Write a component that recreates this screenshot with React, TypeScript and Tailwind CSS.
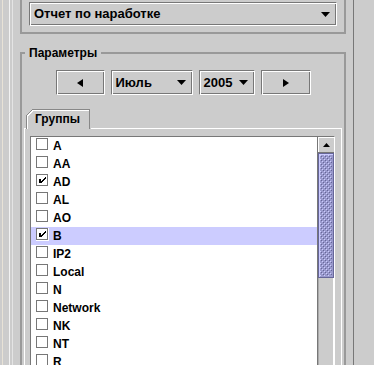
import React from "react";

const groups = [
  { label: "A", checked: false },
  { label: "AA", checked: false },
  { label: "AD", checked: true },
  { label: "AL", checked: false },
  { label: "AO", checked: false },
  { label: "B", checked: true, selected: true },
  { label: "IP2", checked: false },
  { label: "Local", checked: false },
  { label: "N", checked: false },
  { label: "Network", checked: false },
  { label: "NK", checked: false },
  { label: "NT", checked: false },
  { label: "R", checked: false },
];

// Metal "flush 3D" border: dark outer top-left, white outer bottom-right
const flush3d =
  "border border-t-[#777] border-l-[#777] border-r-white border-b-white shadow-[inset_1px_1px_0_#fff,inset_-1px_-1px_0_#777]";

function DownArrow() {
  return (
    <svg width="9" height="5" viewBox="0 0 9 5" className="shrink-0">
      <polygon points="0,0 9,0 4.5,5" fill="#000" />
    </svg>
  );
}

function SideArrow({ dir }: { dir: "left" | "right" }) {
  return (
    <svg width="6" height="8" viewBox="0 0 6 8">
      {dir === "left" ? (
        <polygon points="0,4 6,0 6,8" fill="#000" />
      ) : (
        <polygon points="6,4 0,0 0,8" fill="#000" />
      )}
    </svg>
  );
}

function Combo({ label, className }: { label: string; className: string }) {
  return (
    <div className={`${flush3d} ${className} flex items-center justify-between bg-[#ccc] pl-[4px] pr-[6px] text-[13px]`}>
      <span>{label}</span>
      <DownArrow />
    </div>
  );
}

function CheckBox({ checked }: { checked: boolean }) {
  return (
    <svg width="13" height="13" viewBox="0 0 13 13" shapeRendering="crispEdges" className="shrink-0 mt-[1px]">
      <rect x="0" y="0" width="13" height="13" fill="#fff" />
      <rect x="0" y="0" width="12" height="1" fill="#777" />
      <rect x="0" y="0" width="1" height="12" fill="#777" />
      <rect x="11" y="1" width="1" height="11" fill="#777" />
      <rect x="1" y="11" width="11" height="1" fill="#777" />
      {checked && (
        <g fill="#000">
          <rect x="3" y="5" width="2" height="4" />
          <rect x="9" y="3" width="1" height="2" />
          <rect x="8" y="4" width="1" height="2" />
          <rect x="7" y="5" width="1" height="2" />
          <rect x="6" y="6" width="1" height="2" />
          <rect x="5" y="7" width="1" height="2" />
        </g>
      )}
    </svg>
  );
}

function Bumps() {
  return (
    <svg width="100%" height="100%" className="block">
      <defs>
        <pattern id="bumps" width="4" height="4" patternUnits="userSpaceOnUse">
          <rect width="4" height="4" fill="#9999cc" />
          <rect x="0" y="0" width="1" height="1" fill="#ccccff" />
          <rect x="2" y="2" width="1" height="1" fill="#ccccff" />
          <rect x="1" y="1" width="1" height="1" fill="#666699" />
          <rect x="3" y="3" width="1" height="1" fill="#666699" />
        </pattern>
      </defs>
      <rect width="100%" height="100%" fill="url(#bumps)" />
    </svg>
  );
}

function ScrollBar() {
  return (
    <div className="w-[17px] shrink-0 flex flex-col border-l border-[#777] bg-[#ccc]">
      <div className="h-[16px] flex items-center justify-center shadow-[inset_1px_1px_0_#fff] border-b border-[#777]">
        <svg width="7" height="4" viewBox="0 0 7 4">
          <polygon points="3.5,0 7,4 0,4" fill="#000" />
        </svg>
      </div>
      <div className="h-[125px] border border-[#666699] p-[1px] bg-[#9999cc] shadow-[inset_1px_1px_0_#ccccff]">
        <Bumps />
      </div>
      <div className="flex-1 border-r border-white shadow-[inset_1px_0_0_#aaa]" />
    </div>
  );
}

export default function App() {
  return (
    <div className="w-[374px] h-[365px] overflow-hidden bg-[#ccc] flex font-['Liberation_Sans',Arial,sans-serif] font-bold text-[12px] text-black">
      {/* left edge stripes */}
      <div className="w-[20px] shrink-0 flex">
        <div className="w-[2px]" />
        <div className="w-[1px] bg-[#e8e2d6]" />
        <div className="w-[6px]" />
        <div className="w-[1px] bg-[#f2f2f2]" />
        <div className="w-[2px]" />
        <div className="w-[1px] bg-[#e4e4e4]" />
      </div>

      <div className="w-[326px] shrink-0 flex flex-col">
        {/* report type */}
        <div className="border-x-2 border-b-2 border-[#999] pt-[2px] pb-[6px] px-[7px]">
          <Combo label="Отчет по наработке" className="h-[24px]" />
        </div>

        {/* parameters */}
        <fieldset className="mt-[12px] border-2 border-[#999] min-w-0">
          <legend className="ml-[3px] px-[4px] leading-[14px]">Параметры</legend>

          <div className="flex justify-center gap-[6px] mt-[10px]">
            <div className={`${flush3d} w-[49px] h-[25px] flex items-center justify-center`}>
              <SideArrow dir="left" />
            </div>
            <Combo label="Июль" className="w-[82px] h-[25px]" />
            <Combo label="2005" className="w-[56px] h-[25px]" />
            <div className={`${flush3d} w-[50px] h-[25px] flex items-center justify-center`}>
              <SideArrow dir="right" />
            </div>
          </div>

          {/* tabs */}
          <div className="mx-[2px] mt-[14px]">
            <div className="flex pl-[2px]">
              <div className="relative z-10 -mb-[1px] w-[65px] h-[20px] bg-[#ccc] pl-[9px] pt-[2px] leading-[16px]">
                <svg width="65" height="20" className="absolute inset-0" shapeRendering="crispEdges">
                  <path d="M0.5 20 V6.5 L6.5 0.5 H63.5 V20" fill="none" stroke="#888" />
                  <path d="M1.5 20 V7 L7 1.5 H62.5" fill="none" stroke="#fff" />
                </svg>
                <span className="relative">Группы</span>
              </div>
            </div>
            <div className="border-t border-l border-r border-white pt-[7px] pl-[5px] pr-[6px]">
              <div className="flex border-t border-l border-[#777] border-r border-r-white">
                <div className="flex-1 bg-white">
                  {groups.map((g) => (
                    <div
                      key={g.label}
                      className={`h-[18px] flex items-start gap-[4px] pl-[5px] leading-[18px] ${g.selected ? "bg-[#ccccff]" : ""}`}
                    >
                      <CheckBox checked={g.checked} />
                      <span>{g.label}</span>
                    </div>
                  ))}
                </div>
                <ScrollBar />
              </div>
            </div>
          </div>
        </fieldset>
      </div>

      {/* right edge */}
      <div className="flex-1 flex">
        <div className="w-[7px]" />
        <div className="w-[1px] bg-[#777]" />
      </div>
    </div>
  );
}
